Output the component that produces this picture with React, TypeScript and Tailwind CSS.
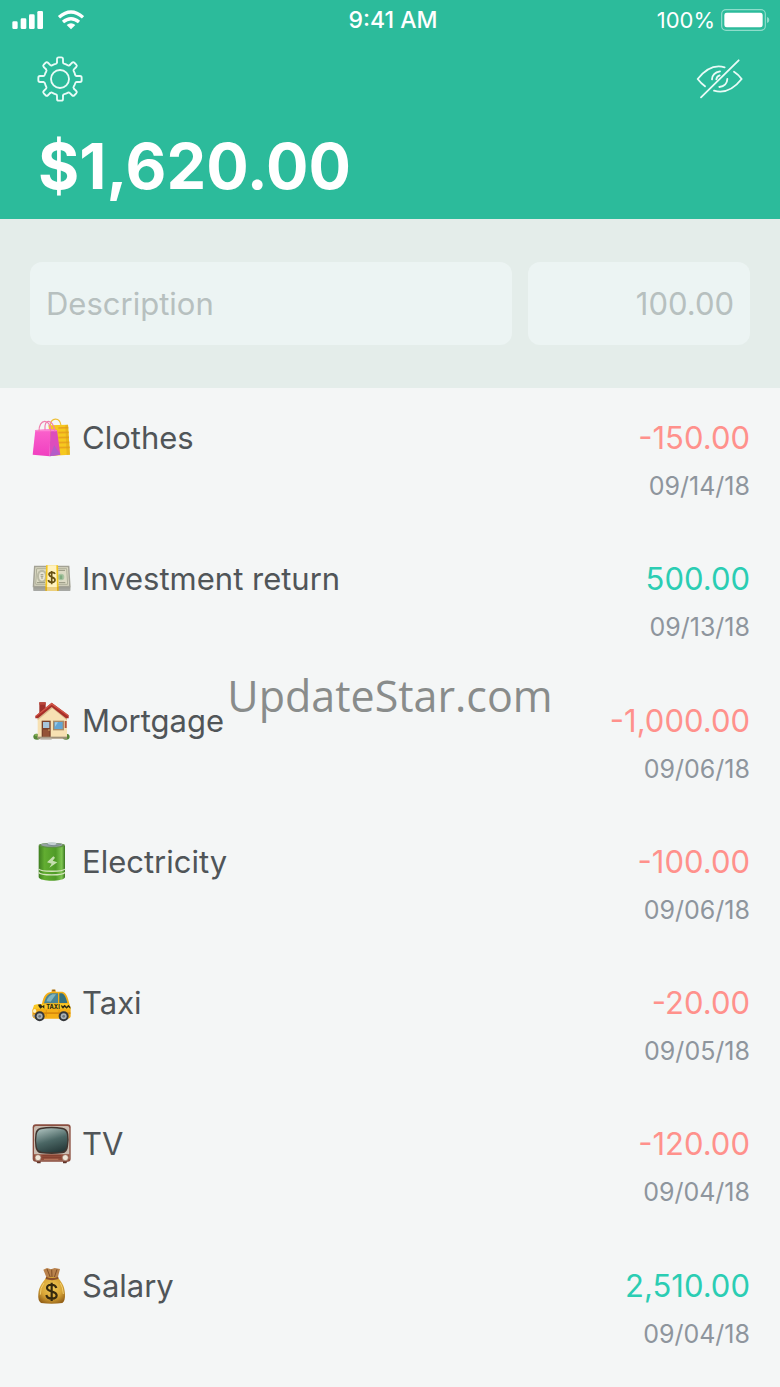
import type { ReactNode } from "react";

type Entry = {
  name: string;
  amount: string;
  date: string;
  income?: boolean;
  icon: ReactNode;
};

function EntryIcon({ viewBox, children }: { viewBox: string; children: ReactNode }) {
  return (
    <svg viewBox={viewBox} className="size-10 shrink-0" aria-hidden="true">
      {children}
    </svg>
  );
}

const bags = (
  <EntryIcon viewBox="21 24 120 120">
    <defs>
      <linearGradient id="pinkBag" x1="0" y1="0" x2="0" y2="1">
        <stop offset="0" stopColor="#fb62cc" />
        <stop offset="1" stopColor="#f03fc0" />
      </linearGradient>
    </defs>
    <path d="M76 46C78 22 104 20 108 46" fill="none" stroke="#eec03a" strokeWidth="3.5" />
    <path d="M70 46L129 44L135 134L84 137Z" fill="#f6c81f" />
    <path d="M100 54L130 53M100 68L131 67M100 83L132 82M100 98L133 97M100 113L134 112" stroke="#e9a41e" strokeWidth="5" />
    <path d="M121 45L129 44L135 134L125 135Z" fill="#d9a018" opacity=".45" />
    <path d="M31 60L76 58L74 139L23 134Z" fill="url(#pinkBag)" />
    <path d="M76 58L96 60L106 134L74 139Z" fill="#dd4dbc" />
    <path d="M88 106L74 139L106 134Z" fill="#b45cc8" />
    <path d="M31 60L76 58L96 60L95 64L31 64Z" fill="#fd85d5" />
    <path d="M42 66C40 24 78 24 77 64M60 60C56 26 82 24 90 64" fill="none" stroke="#f07fae" strokeWidth="3.5" />
  </EntryIcon>
);

const cash = (
  <EntryIcon viewBox="21 28 120 120">
    <path d="M25 111H136V123H25Z" fill="#8d8e88" />
    <path d="M25 115H136M25 119H136" stroke="#c8c8c0" strokeWidth="1.5" />
    <path d="M27 48H133L137 113H23Z" fill="#a3a295" />
    <path d="M31 53H129L132 108H28Z" fill="#dcdac4" />
    <path d="M35 57H125L128 104H32Z" fill="none" stroke="#a5a690" strokeWidth="2.5" />
    <ellipse cx="51" cy="80" rx="15" ry="20" fill="#babaa5" />
    <ellipse cx="51" cy="80" rx="9" ry="13" fill="#e6e4d2" />
    <path d="M47 75H55M47 80H55M48 85H54" stroke="#8b8d79" strokeWidth="2.5" />
    <circle cx="108" cy="82" r="10" fill="#a9c4a0" />
    <path d="M104 77H112V88H104Z" fill="#7fac80" />
    <path d="M100 62H120M36 99H60M102 99H121" stroke="#92937e" strokeWidth="3" />
    <path d="M63 47H99L101 123H61Z" fill="#f3c51c" />
    <path d="M68 47H94L96 123H66Z" fill="#fff2bf" />
    <path d="M61 112H101V123H61Z" fill="#c58b0c" opacity=".35" />
    <path d="M90 73C88 66 71 66 72 75C73 84 90 81 90 91C90 100 72 101 70 91M80 64V104" fill="none" stroke="#665014" strokeWidth="5" />
  </EntryIcon>
);

const house = (
  <EntryIcon viewBox="21 32 120 120">
    <ellipse cx="36" cy="139" rx="11" ry="9" fill="#568638" />
    <ellipse cx="123" cy="139" rx="11" ry="9" fill="#568638" />
    <circle cx="33" cy="134" r="4" fill="#7dab4e" />
    <circle cx="121" cy="134" r="4" fill="#7dab4e" />
    <path d="M43 36H62V66L43 80Z" fill="#9f302b" />
    <path d="M43 36H62V43H43Z" fill="#bb473c" />
    <path d="M38 82L82 45L126 82V144H38Z" fill="#f7e1b3" />
    <path d="M38 82L82 45L126 82V90L82 54L38 90Z" fill="#d8b98c" />
    <path d="M80 37L131 75V84H123L80 50L39 84H31V77Z" fill="#a92f29" />
    <path d="M80 37L131 75L129 78L80 43L33 79L31 77Z" fill="#d25748" />
    <path d="M50 91H77V144H50Z" fill="#79412a" />
    <path d="M54 95H73V113H54Z" fill="#a6c5db" />
    <path d="M54 118H73V140H54Z" fill="#945337" />
    <circle cx="72" cy="119" r="2" fill="#f1cf78" />
    <path d="M84 91H117V120H84Z" fill="#a78b69" />
    <path d="M88 95H113V116H88Z" fill="#62a5d4" />
    <path d="M90 96H99L90 109Z" fill="#9cccea" />
    <path d="M119 92H125V113H119Z" fill="#b3523d" />
    <path d="M38 139H126V145H38Z" fill="#9f9079" />
    <path d="M46 142H80V148H46Z" fill="#b8b0a4" />
  </EntryIcon>
);

const battery = (
  <EntryIcon viewBox="21 36 120 120">
    <defs>
      <linearGradient id="cell">
        <stop offset="0" stopColor="#3e7e20" />
        <stop offset=".22" stopColor="#62ad31" />
        <stop offset=".65" stopColor="#4f9b27" />
        <stop offset=".88" stopColor="#7fc652" />
        <stop offset="1" stopColor="#387420" />
      </linearGradient>
    </defs>
    <path d="M41 47V142C44 156 117 156 120 142V47Z" fill="url(#cell)" />
    <path d="M41 117C47 126 114 126 120 117M41 127C47 137 114 137 120 127" fill="none" stroke="#d5e4be" strokeWidth="4" />
    <ellipse cx="80.5" cy="46" rx="39.5" ry="8" fill="#5e8f45" />
    <ellipse cx="80.5" cy="44.5" rx="33" ry="5.5" fill="#95a2a0" />
    <ellipse cx="81" cy="41" rx="13" ry="4" fill="#c5d0d4" />
    <path d="M67 44L87 48L108 43" fill="none" stroke="#6d7f89" strokeWidth="2" />
    <path d="M85 79L66 97L80 101L73 113L97 97L83 92L90 83Z" fill="#c5dfae" />
  </EntryIcon>
);

const taxi = (
  <EntryIcon viewBox="21 24 120 120">
    <path d="M80 44H92V52H80Z" fill="#e39a1a" />
    <path d="M82 44H90V48H82Z" fill="#875f22" />
    <path d="M51 86C56 62 63 52 80 50H112C124 52 129 68 133 86L137 100V124Q137 130 130 131H30Q23 130 22 122V105Q24 91 51 86Z" fill="#f5af16" />
    <path d="M57 85C62 65 69 57 79 55H99V85Z" fill="#4b8594" />
    <path d="M103 55H111C119 58 124 71 127 84H103Z" fill="#34717f" />
    <path d="M64 79C69 66 75 61 82 58H93L77 80Z" fill="#83b4bd" />
    <path d="M27 90Q45 84 133 86L137 101H24Z" fill="#f9c826" />
    <path d="M39 89L47 88L52 94L58 89V101L52 96L47 101L42 96ZM109 89L114 94L119 89L125 95L130 89L136 95V101L130 96L125 101L119 96L114 101L109 96Z" fill="#2e2914" />
    <text x="84" y="101" textAnchor="middle" fontSize="17" fontWeight="800" fill="#2e2914">TAXI</text>
    <path d="M25 112H136V117H25Z" fill="#d98a0b" />
    <path d="M102 104V122M64 105V125" stroke="#d78a0f" strokeWidth="2" />
    <ellipse cx="29" cy="108" rx="5" ry="6" fill="#fff0b5" />
    <path d="M22 119H35V127H25Z" fill="#b5a184" />
    <circle cx="44" cy="124" r="15" fill="#34373a" />
    <circle cx="116" cy="124" r="15" fill="#34373a" />
    <circle cx="44" cy="124" r="9" fill="#a9b0b4" />
    <circle cx="116" cy="124" r="9" fill="#a9b0b4" />
    <circle cx="44" cy="124" r="4" fill="#6d757a" />
    <circle cx="116" cy="124" r="4" fill="#6d757a" />
  </EntryIcon>
);

const tv = (
  <EntryIcon viewBox="21 28 120 120">
    <defs>
      <linearGradient id="screen" x1=".3" y1="0" x2=".7" y2="1">
        <stop offset="0" stopColor="#a2b7b4" />
        <stop offset=".5" stopColor="#4b6765" />
        <stop offset="1" stopColor="#263939" />
      </linearGradient>
    </defs>
    <path d="M33 138H47V146H37ZM114 138H128L124 146H114Z" fill="#5c3429" />
    <rect x="23" y="29" width="114" height="112" rx="9" fill="#8a4d3f" />
    <rect x="27" y="34" width="106" height="103" rx="6" fill="#c9bbaf" />
    <path d="M27 119H133V137H27Z" fill="#954f3b" />
    <path d="M52 123H108M52 129H108" stroke="#7f3f30" strokeWidth="2.5" />
    <path d="M57 134H100" stroke="#b97a5e" strokeWidth="3" />
    <path d="M47 39Q80 33 113 39Q128 41 130 58Q133 77 129 96Q127 114 112 116Q80 120 48 116Q33 113 31 96Q28 77 31 58Q33 41 47 39Z" fill="#40352f" />
    <path d="M49 44Q80 38 111 44Q124 46 126 61Q128 78 125 94Q123 109 110 111Q80 115 50 111Q37 109 35 94Q32 78 35 61Q37 46 49 44Z" fill="url(#screen)" />
    <circle cx="39" cy="129" r="9" fill="#efe6d7" stroke="#8f6d5d" strokeWidth="2" />
    <circle cx="121" cy="129" r="9" fill="#efe6d7" stroke="#8f6d5d" strokeWidth="2" />
  </EntryIcon>
);

const moneyBag = (
  <EntryIcon viewBox="21 32 120 120">
    <defs>
      <radialGradient id="sack" cx=".5" cy=".4" r=".65">
        <stop offset="0" stopColor="#f0cb58" />
        <stop offset=".6" stopColor="#d8a536" />
        <stop offset="1" stopColor="#966319" />
      </radialGradient>
    </defs>
    <path d="M55 43L66 38L78 42L89 38L105 41L98 68H65Z" fill="#b9824c" />
    <path d="M66 41L76 66M80 43L81 66M96 42L88 66" stroke="#815027" strokeWidth="3" />
    <path d="M65 65H98C107 79 119 87 120 117Q121 137 112 143Q80 147 48 143Q38 136 40 117C42 89 57 78 65 65Z" fill="url(#sack)" />
    <path d="M63 64Q81 72 100 64L100 71Q81 78 62 71Z" fill="#8b4f29" />
    <path d="M57 83Q45 98 46 118M106 83Q114 96 115 116" fill="none" stroke="#f1cf70" strokeWidth="3" />
    <path d="M94 98C90 84 66 86 66 98C66 111 94 105 95 120C95 133 67 134 64 119M80 82V137" fill="none" stroke="#35290e" strokeWidth="6.5" />
  </EntryIcon>
);

const entries: Entry[] = [
  { name: "Clothes", amount: "-150.00", date: "09/14/18", icon: bags },
  { name: "Investment return", amount: "500.00", date: "09/13/18", income: true, icon: cash },
  { name: "Mortgage", amount: "-1,000.00", date: "09/06/18", icon: house },
  { name: "Electricity", amount: "-100.00", date: "09/06/18", icon: battery },
  { name: "Taxi", amount: "-20.00", date: "09/05/18", icon: taxi },
  { name: "TV", amount: "-120.00", date: "09/04/18", icon: tv },
  { name: "Salary", amount: "2,510.00", date: "09/04/18", income: true, icon: moneyBag },
];

function SignalIcons() {
  return (
    <svg viewBox="0 0 216 60" className="h-5 w-[72px]" fill="white" aria-hidden="true">
      <rect x="1" y="34" width="16" height="23" rx="4" />
      <rect x="26" y="25" width="17" height="32" rx="4" />
      <rect x="51" y="13" width="17" height="44" rx="4" />
      <rect x="76" y="3" width="17" height="54" rx="4" />
      <g fill="none" stroke="white" strokeWidth="10">
        <path d="M141 22Q177-10 213 22" />
        <path d="M153 36Q177 16 201 36" />
      </g>
      <path d="M164 45Q177 35 190 45L177 58Z" />
    </svg>
  );
}

function BatteryIcon() {
  return (
    <svg viewBox="0 0 147 66" className="h-[22px] w-[49px]" aria-hidden="true">
      <rect x="2" y="2" width="131" height="62" rx="13" fill="none" stroke="#8eddcb" strokeWidth="3.5" />
      <rect x="10" y="11" width="115" height="44" rx="7" fill="white" />
      <path d="M138 24Q145 26 145 33Q145 40 138 42Z" fill="#8eddcb" />
    </svg>
  );
}

const gearAngles = [0, 45, 90, 135, 180, 225, 270, 315];

function GearIcon() {
  return (
    <svg viewBox="-69 -69 138 138" className="size-[46px]" fill="none" stroke="#e9fbf7" strokeWidth="5.5" strokeLinecap="round" strokeLinejoin="round" aria-hidden="true">
      <circle r="27" />
      {gearAngles.map((angle) => (
        <path key={angle} transform={`rotate(${angle})`} d="M-9-50V-60Q-9-65-4-65H4Q9-65 9-60V-50Q9-47 12-46Q19-44 23-41Q26-39 29-42" />
      ))}
    </svg>
  );
}

function HiddenEyeIcon() {
  return (
    <svg viewBox="168 176 144 120" className="h-10 w-12" fill="none" stroke="#e9fbf7" strokeWidth="5.5" strokeLinecap="round" strokeLinejoin="round" aria-hidden="true">
      <path d="M183 291L296 180" />
      <path d="M195 258Q183 249 173 236Q211 188 254 201" />
      <path d="M282 214Q295 222 305 236Q267 284 222 271" />
      <path d="M216 237Q217 217 240 213" />
      <path d="M262 236Q261 257 238 260" />
      <path d="M229 237Q230 228 239 225" />
    </svg>
  );
}

export default function App() {
  return (
    <div className="relative flex min-h-screen flex-col bg-[#f4f6f6] font-['Inter','Noto_Sans',sans-serif] text-[#505558]">
      <header className="bg-[#2cbb9b] text-white">
        <div className="grid h-10 grid-cols-3 items-center pr-2.5 pl-3 text-[22px] leading-6">
          <SignalIcons />
          <span className="pl-1 text-center text-[23px] font-medium">9:41 AM</span>
          <div className="flex items-center justify-end gap-1.5">
            <span>100%</span>
            <BatteryIcon />
          </div>
        </div>
        <div className="flex h-[78px] items-center justify-between pr-9 pl-[37px]">
          <button type="button" aria-label="Settings">
            <GearIcon />
          </button>
          <button type="button" aria-label="Hide balance">
            <HiddenEyeIcon />
          </button>
        </div>
        <h1 className="h-[101px] pt-2 pl-[38px] text-[63px] leading-[80px] font-bold">$1,620.00</h1>
      </header>

      <form className="flex gap-4 bg-[#e4edea] px-[30px] py-[43px]">
        <input
          type="text"
          aria-label="Description"
          placeholder="Description"
          className="h-[83px] min-w-0 flex-1 rounded-xl bg-[#ecf4f3] px-4 text-[31px] placeholder:text-[#b7c0bf]"
        />
        <input
          type="text"
          inputMode="decimal"
          aria-label="Amount"
          placeholder="100.00"
          className="h-[83px] w-[222px] rounded-xl bg-[#ecf4f3] px-4 text-right text-[31px] placeholder:text-[#b7c0bf]"
        />
      </form>

      <ul className="grid flex-1 auto-rows-fr pb-2.5">
        {entries.map((entry) => (
          <li key={entry.name} className="flex justify-between pt-[30px] pr-[30px] pl-8">
            <div className="flex h-10 items-center gap-2.5">
              {entry.icon}
              <span className="text-[31px] leading-10">{entry.name}</span>
            </div>
            <div className="text-right">
              <p className={entry.income ? "text-[31px] leading-10 text-[#2bcdb3]" : "text-[31px] leading-10 text-[#ff918c]"}>
                {entry.amount}
              </p>
              <p className="pt-3 text-[25px] leading-8 text-[#8e959d]">{entry.date}</p>
            </div>
          </li>
        ))}
      </ul>

      <div className="pointer-events-none absolute inset-0 flex items-center justify-center pt-1">
        <span className="font-['Open_Sans','Noto_Sans',sans-serif] text-[43px] leading-[60px] text-[#898c8b]">UpdateStar.com</span>
      </div>
    </div>
  );
}
